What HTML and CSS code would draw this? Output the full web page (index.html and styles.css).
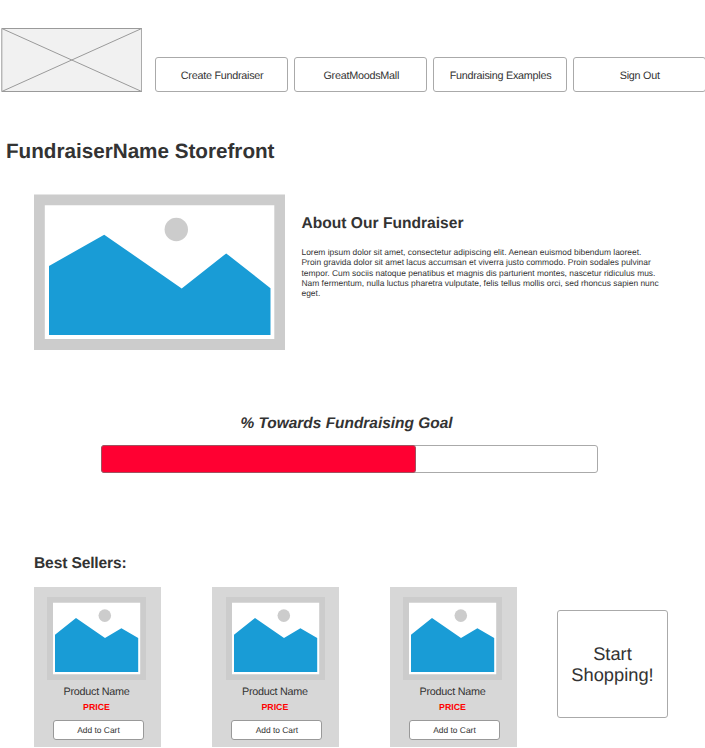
FILE: index.html
```html
<!DOCTYPE html>
<html lang="en">
<head>
<meta charset="utf-8">
<title>FundraiserName Storefront</title>
<link rel="stylesheet" href="styles.css">
</head>
<body>
<svg class="defs" aria-hidden="true">
  <symbol id="product" viewBox="0 0 99 83" preserveAspectRatio="none">
    <path fill="#ccc" d="M0 0H99V83H0Z"/>
    <path fill="#fff" d="M6 5.7H93.2V77.2H6Z"/>
    <path fill="#199cd6" d="M8 37.8L29 21L58 41L74.4 31.3L91.2 41V75H8Z"/>
    <circle fill="#ccc" cx="57.8" cy="18.6" r="6.3"/>
  </symbol>
</svg>
<header class="header">
  <svg class="logo" viewBox="0 0 142 65"><path d="M1.8 1.5H141.7V64.5H1.8ZL141.7 64.5M141.7 1.5L1.8 64.5" fill="#f1f1f1" stroke="#9a9a9a"/></svg>
  <nav class="nav">
    <a class="button">Create Fundraiser</a>
    <a class="button">GreatMoodsMall</a>
    <a class="button">Fundraising Examples</a>
    <a class="button">Sign Out</a>
  </nav>
</header>
<main>
  <h1>FundraiserName Storefront</h1>
  <section class="about">
    <svg class="hero" viewBox="0 0 251 156">
      <path fill="#ccc" d="M0 .5H251V156H0Z"/>
      <path fill="#fff" d="M10.8 11.3H240.3V145H10.8Z"/>
      <path fill="#199cd6" d="M15 72L70.2 40.7L147.7 94.4L192.2 59.4L236.5 94.2V141H15Z"/>
      <circle fill="#ccc" cx="142.3" cy="35.5" r="11.7"/>
    </svg>
    <div class="story">
      <h2>About Our Fundraiser</h2>
      <p>Lorem ipsum dolor sit amet, consectetur adipiscing elit. Aenean euismod bibendum laoreet.<br>Proin gravida dolor sit amet lacus accumsan et viverra justo commodo. Proin sodales pulvinar<br>tempor. Cum sociis natoque penatibus et magnis dis parturient montes, nascetur ridiculus mus.<br>Nam fermentum, nulla luctus pharetra vulputate, felis tellus mollis orci, sed rhoncus sapien nunc<br>eget.</p>
    </div>
  </section>
  <section class="goal">
    <h2>% Towards Fundraising Goal</h2>
    <div class="track"><div class="fill"></div></div>
  </section>
  <section class="sellers">
    <h2>Best Sellers:</h2>
    <div class="products">
      <article class="card"><svg class="thumb"><use href="#product"/></svg><p class="name">Product Name</p><p class="price">PRICE</p><a class="button cart">Add to Cart</a></article>
      <article class="card"><svg class="thumb"><use href="#product"/></svg><p class="name">Product Name</p><p class="price">PRICE</p><a class="button cart">Add to Cart</a></article>
      <article class="card"><svg class="thumb"><use href="#product"/></svg><p class="name">Product Name</p><p class="price">PRICE</p><a class="button cart">Add to Cart</a></article>
      <a class="button shop">Start<br>Shopping!</a>
    </div>
  </section>
</main>
</body>
</html>
```

FILE: styles.css
```css
* { box-sizing: border-box; margin: 0; padding: 0; }
body {
  width: 705px;
  height: 748px;
  overflow: hidden;
  background: #fff;
  color: #333;
  font-family: "Liberation Sans", Arial, sans-serif;
  font-size: 10.8px;
  letter-spacing: -.26px;
  text-rendering: geometricPrecision;
}
svg { display: block; flex: none; }
.defs { width: 0; height: 0; position: absolute; }
.header { display: flex; align-items: flex-end; height: 92px; }
.logo { width: 142px; height: 65px; margin-right: 13px; }
.nav { display: flex; flex: none; gap: 6px; }
.button {
  display: flex;
  align-items: center;
  justify-content: center;
  text-align: center;
  border: 1px solid #aaa;
  border-radius: 3px;
  background: #fff;
}
.nav .button { width: 133.2px; height: 35px; padding: 3px 0 0 1px; }
h1 { margin: 48px 0 0 6px; font-size: 20.7px; line-height: 24px; letter-spacing: -.02px; }
h2 { font-size: 15.6px; line-height: 18px; letter-spacing: 0; }
.about { display: flex; margin: 30px 0 0 34px; }
.hero { width: 251px; height: 156px; }
.story { margin: 21px 0 0 16.5px; white-space: nowrap; letter-spacing: 0; }
.story p { margin-top: 14px; font-size: 8.43px; line-height: 10.35px; }
.goal { margin: 65px 0 0 101px; width: 497px; }
.goal h2 { font-style: italic; font-size: 15.45px; text-align: center; padding-right: 6px; }
.track { margin-top: 12px; height: 28px; border: 1px solid #aaa; border-radius: 3px; }
.fill { width: 315px; height: 28px; margin: -1px; border: 1px solid #a0525f; border-radius: 3px; background: #ff0032; }
.sellers { margin: 82px 0 0 34px; }
.sellers h2 { letter-spacing: -.15px; }
.products { display: flex; margin-top: 14px; }
.card { flex: none; width: 127px; height: 160px; padding-top: 10px; background: #d7d7d7; text-align: center; }
.card + .card { margin-left: 51.4px; }
.card + .card + .card { margin-left: 50.6px; }
.thumb { width: 99px; height: 83px; margin-left: 13.3px; }
.name { margin-top: 6px; line-height: 13px; padding-right: 2px; }
.price { margin-top: 3px; font-size: 8.8px; line-height: 10px; font-weight: bold; letter-spacing: 0; color: #f00; padding-right: 2px; }
.cart { width: 91px; height: 20px; margin: 8px 0 0 19px; font-size: 8.41px; letter-spacing: 0; border-color: #999; }
.shop { width: 111px; height: 108px; margin: 23px 0 0 40px; padding-bottom: 1px; font-size: 18.3px; letter-spacing: 0; line-height: 21px; }
```
